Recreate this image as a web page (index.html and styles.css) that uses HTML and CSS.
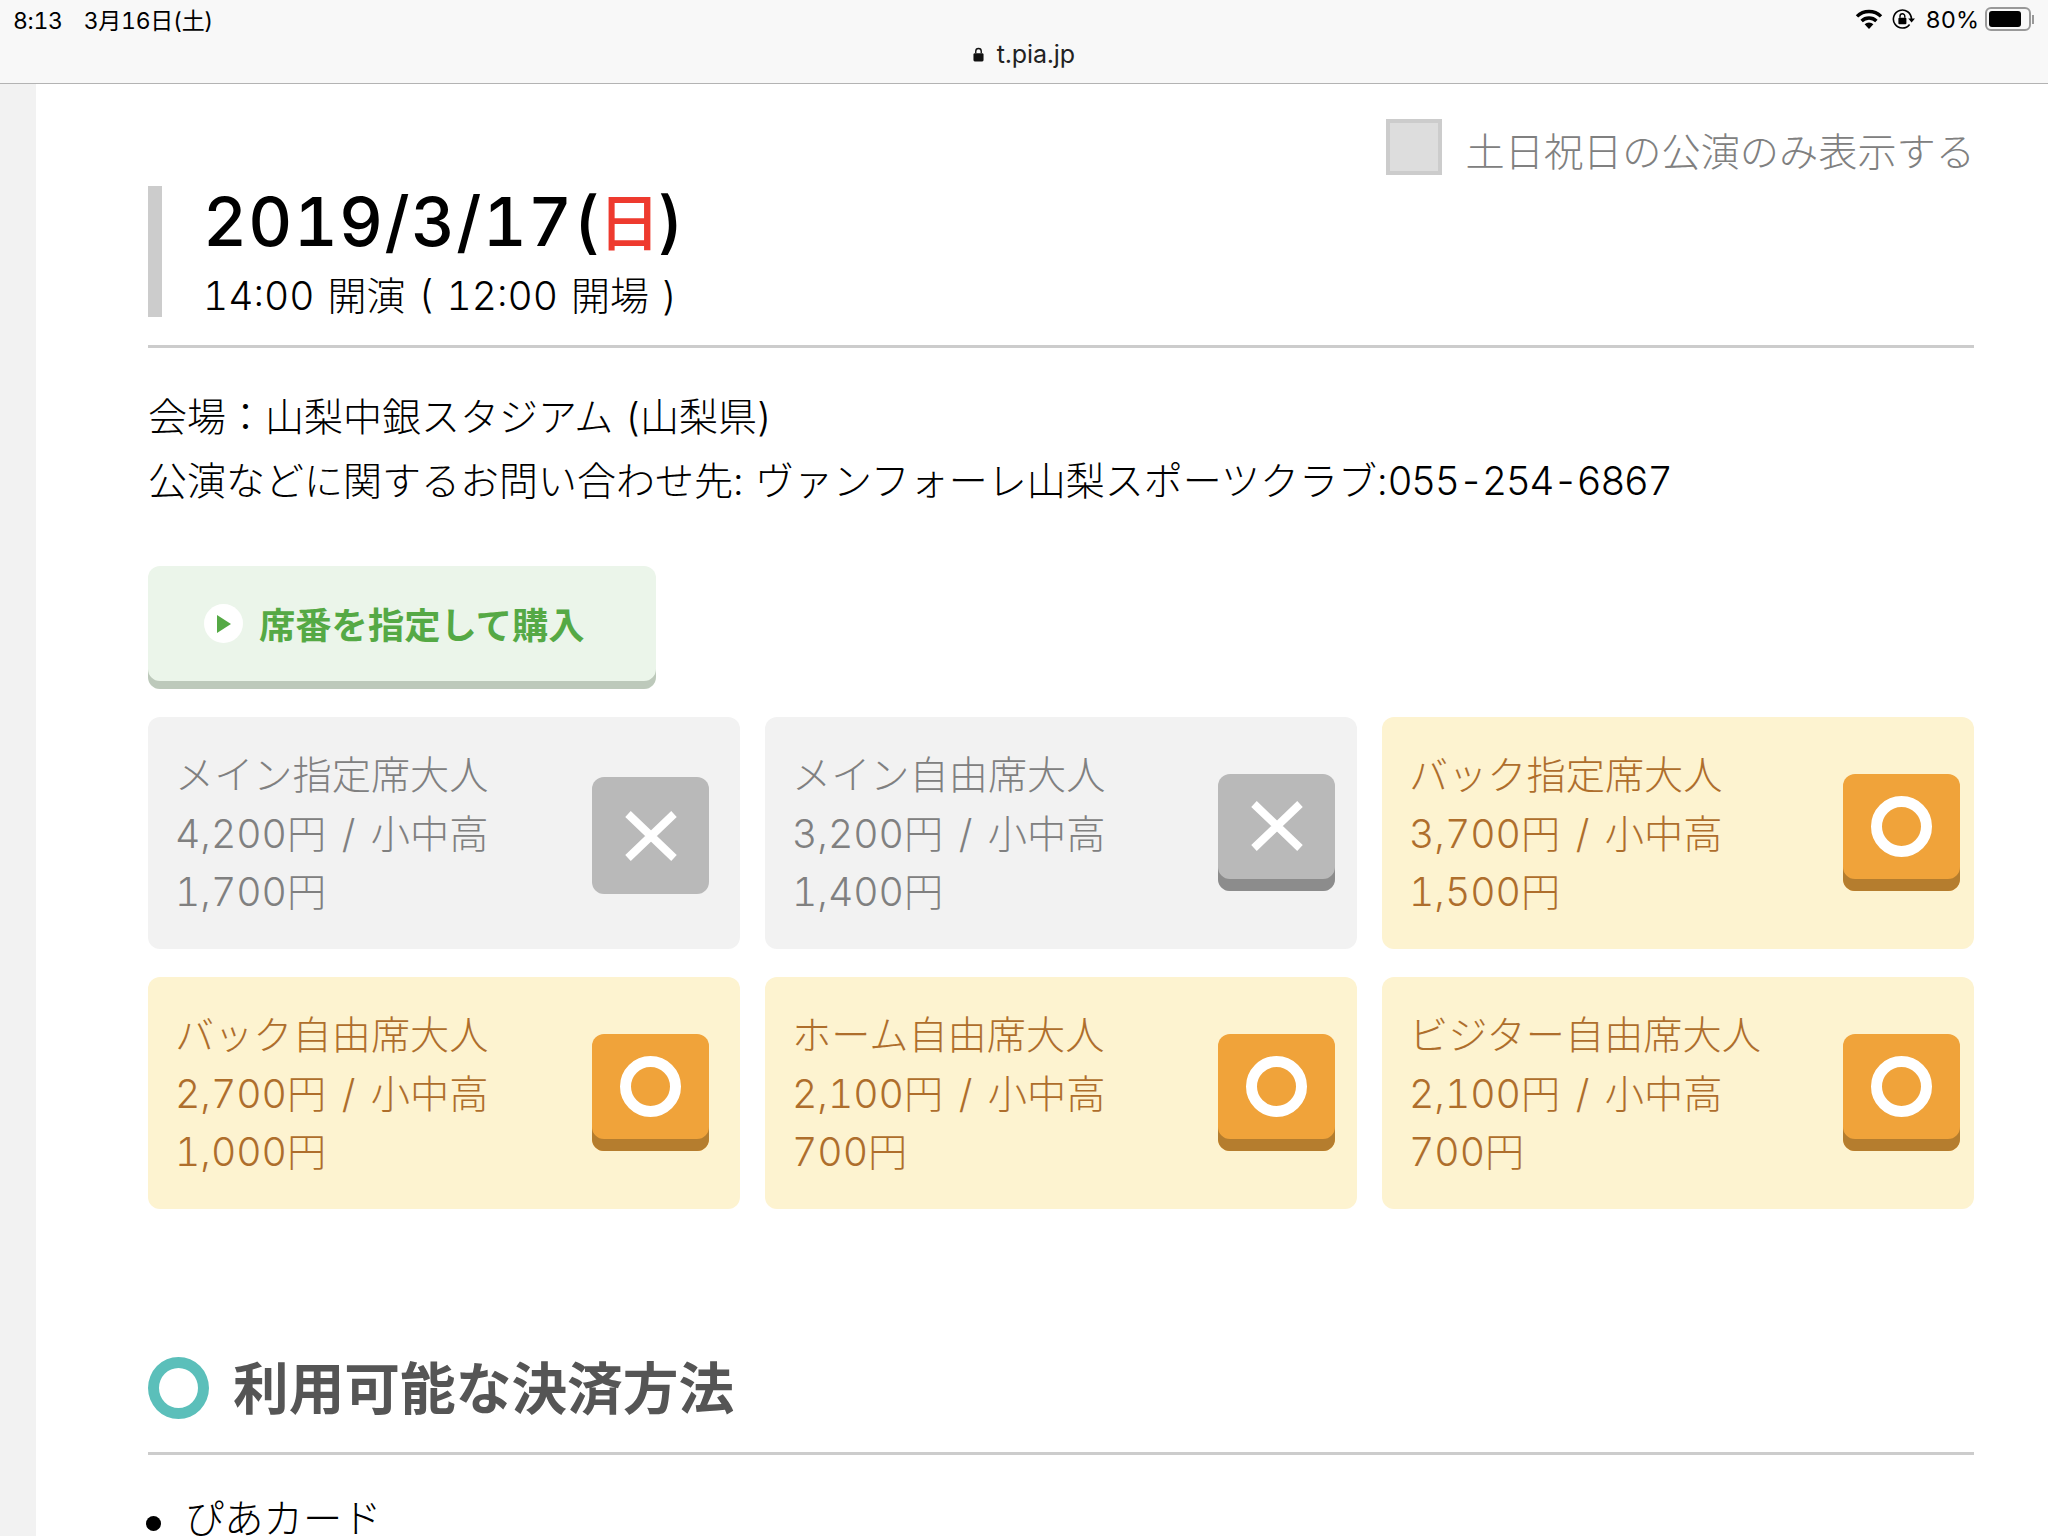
FILE: index.html
```html
<!DOCTYPE html>
<html lang="ja">
<head>
  <meta charset="UTF-8" />
  <title>t.pia.jp</title>
  <link rel="stylesheet" href="styles.css">
</head>
<body>
  <header class="topbar">
    <div class="status">
      <div class="status-left"><span class="clock">8:13</span><span>3月16日(土)</span></div>
      <div class="status-right">
        <svg class="wifi" viewBox="0 0 28 20" width="28" height="20">
          <path d="M14 20 L9.6 15.2 A6.4 6.4 0 0 1 18.4 15.2 Z" fill="#000"/>
          <path d="M6.6 12 A10.6 10.6 0 0 1 21.4 12" fill="none" stroke="#000" stroke-width="3.4"/>
          <path d="M2 7.4 A17 17 0 0 1 26 7.4" fill="none" stroke="#000" stroke-width="3.4"/>
        </svg>
        <svg class="rotlock" viewBox="0 0 24 20" width="24" height="20">
          <path d="M19.4 10 A9 9 0 1 0 17.6 15.4" fill="none" stroke="#000" stroke-width="1.6"/>
          <path d="M16.2 9.4 L23 9.4 L19.6 13.6 Z" fill="#000"/>
          <rect x="6.4" y="8.8" width="8" height="6.4" rx="1" fill="#000"/>
          <path d="M8 8.8 V7.2 A2.4 2.4 0 0 1 12.8 7.2 V8.8" fill="none" stroke="#000" stroke-width="1.4"/>
        </svg>
        <span class="battery-text">80%</span>
        <div class="battery"><div class="battery-level"></div></div>
        <div class="battery-nub"></div>
      </div>
    </div>
    <div class="address">
      <svg viewBox="0 0 12 15" width="11" height="15">
        <rect x="0.5" y="6" width="11" height="9" rx="1.5" fill="#111"/>
        <path d="M3 6 V4 A3 3 0 0 1 9 4 V6" fill="none" stroke="#111" stroke-width="1.5"/>
      </svg>
      <span>t.pia.jp</span>
    </div>
  </header>

  <div class="page">
    <div class="gutter"></div>
    <main class="content">
      <div class="holiday">
        <span class="checkbox"></span>
        <span class="holiday-label">土日祝日の公演のみ表示する</span>
      </div>

      <div class="date-block">
        <h1 class="date">2019/3/17(<span class="sun">日</span>)</h1>
        <p class="time">14:00 開演 ( 12:00 開場 )</p>
      </div>

      <div class="info">
        <p>会場：山梨中銀スタジアム (山梨県)</p>
        <p>公演などに関するお問い合わせ先: ヴァンフォーレ山梨スポーツクラブ:<span class="tel">055-254-6867</span></p>
      </div>

      <a class="buy" href="#">
        <span class="play"><svg viewBox="0 0 14 18" width="14" height="18"><path d="M0 0 L14 9 L0 18 Z" fill="#55a945"/></svg></span>
        <span class="buy-label">席番を指定して購入</span>
      </a>

      <div class="seats">
        <div class="seat off">
          <p>メイン指定席大人<br>4,200円 / 小中高<br>1,700円</p>
          <div class="mark flat"><svg class="cross" viewBox="0 0 52 50" width="52" height="50"><path d="M3 3 L49 47 M49 3 L3 47" stroke="#fff" stroke-width="8"/></svg></div>
        </div>
        <div class="seat off">
          <p>メイン自由席大人<br>3,200円 / 小中高<br>1,400円</p>
          <div class="mark"><svg class="cross" viewBox="0 0 52 50" width="52" height="50"><path d="M3 3 L49 47 M49 3 L3 47" stroke="#fff" stroke-width="8"/></svg></div>
        </div>
        <div class="seat">
          <p>バック指定席大人<br>3,700円 / 小中高<br>1,500円</p>
          <div class="mark"><span class="ring"></span></div>
        </div>
        <div class="seat">
          <p>バック自由席大人<br>2,700円 / 小中高<br>1,000円</p>
          <div class="mark"><span class="ring"></span></div>
        </div>
        <div class="seat">
          <p>ホーム自由席大人<br>2,100円 / 小中高<br>700円</p>
          <div class="mark"><span class="ring"></span></div>
        </div>
        <div class="seat">
          <p>ビジター自由席大人<br>2,100円 / 小中高<br>700円</p>
          <div class="mark"><span class="ring"></span></div>
        </div>
      </div>

      <h2 class="section"><span class="section-ring"></span><span class="section-title">利用可能な決済方法</span></h2>
      <ul class="pay">
        <li>ぴあカード</li>
      </ul>
    </main>
  </div>
</body>
</html>
```

FILE: styles.css
```css
html, body {
  margin: 0;
  height: 1536px;
  overflow: hidden;
}
body {
  font-family: Inter, "Noto Sans CJK JP", sans-serif;
  font-variant-numeric: tabular-nums;
  background: #fff;
  color: #000;
}
p, h1, h2, ul {
  margin: 0;
  padding: 0;
}

/* browser bar */
.topbar {
  height: 83px;
  background: #f8f8f8;
  border-bottom: 1px solid #b3b3b3;
}
.status {
  display: flex;
  justify-content: space-between;
  align-items: center;
  height: 38px;
  font-size: 23.5px;
  padding: 0 14px 0 13px;
}
.status-left {
  display: flex;
  align-items: baseline;
  gap: 21px;
  font-size: 23px;
  letter-spacing: -0.3px;
}
.status-right {
  display: flex;
  align-items: center;
}
.wifi { margin-right: 9px; }
.rotlock { margin-right: 9px; }
.battery-text { margin-right: 6px; }
.battery {
  box-sizing: border-box;
  width: 46px;
  height: 24px;
  border: 2px solid #999;
  border-radius: 6px;
  padding: 2px;
}
.battery-level {
  width: 32px;
  height: 16px;
  background: #000;
  border-radius: 3px;
}
.battery-nub {
  width: 2px;
  height: 9px;
  margin-left: 1px;
  background: #999;
}
.address {
  display: flex;
  justify-content: center;
  align-items: center;
  gap: 13px;
  font-size: 25px;
  height: 32px;
  color: #222;
}

.page {
  display: flex;
}
.gutter {
  width: 36px;
  height: 1452px;
  background: #f2f2f2;
}
.content {
  width: 1826px;
  margin-left: 112px;
  padding-top: 35px;
}

.holiday {
  display: flex;
  align-items: center;
  justify-content: flex-end;
  gap: 24px;
  font-size: 39.2px;
  font-weight: 300;
  color: #808080;
  height: 56px;
}
.holiday-label {
  margin-top: 4px;
  margin-right: -1px;
}
.checkbox {
  box-sizing: border-box;
  width: 56px;
  height: 56px;
  background: #ddd;
  border: 4px solid #ccc;
}

.date-block {
  margin-top: 11px;
  height: 131px;
  border-left: 14px solid #ccc;
  padding-left: 41px;
}
.date {
  font-size: 68px;
  font-weight: 500;
  line-height: 70px;
  letter-spacing: 1.3px;
}
.sun {
  color: #ee3a2e;
  font-size: 62px;
  letter-spacing: 0;
  margin: 0 -3px 0 -3px;
}
.time {
  font-size: 39px;
  font-weight: 300;
  line-height: 50px;
  margin-top: 12px;
  word-spacing: 2.5px;
}

.info {
  margin-top: 28px;
  border-top: 3px solid #ccc;
  padding-top: 37px;
  font-size: 39px;
  font-weight: 300;
  line-height: 64px;
  word-spacing: 1px;
}
.tel {
  letter-spacing: -1.6px;
}

.buy {
  display: flex;
  align-items: center;
  box-sizing: border-box;
  width: 508px;
  height: 123px;
  margin-top: 53px;
  padding: 0 0 8px 56px;
  gap: 16px;
  background: #ebf5ea;
  border-radius: 12px;
  box-shadow: inset 0 -8px 0 #bdc9bb;
  color: #55a945;
  font-size: 36.3px;
  font-weight: 700;
  text-decoration: none;
}
.buy-label {
  margin-bottom: 2px;
}
.play {
  display: flex;
  align-items: center;
  justify-content: center;
  width: 39px;
  height: 39px;
  background: #fff;
  border-radius: 50%;
}

.seats {
  display: grid;
  grid-template-columns: repeat(3, 592px);
  grid-auto-rows: 232px;
  column-gap: 25px;
  row-gap: 28px;
  margin-top: 28px;
}
.seat {
  display: flex;
  align-items: center;
  justify-content: space-between;
  padding-left: 27px;
  background: #fdf3d0;
  border-radius: 12px;
  color: #ae6e2c;
  font-size: 39.2px;
  font-weight: 300;
  line-height: 58.5px;
  word-spacing: 5px;
}
.seat p {
  margin-top: 2px;
}
.seat.off {
  background: #f2f2f2;
  color: #808080;
}
.seat:nth-child(3n+1) { padding-right: 31px; }
.seat:nth-child(3n+2) { padding-right: 22px; }
.seat:nth-child(3n) { padding-right: 14px; }

.mark {
  display: flex;
  align-items: center;
  justify-content: center;
  box-sizing: border-box;
  width: 117px;
  height: 117px;
  margin-top: -2px;
  padding-bottom: 12px;
  background: #f0a33a;
  border-radius: 12px;
  box-shadow: inset 0 -12px 0 #b57d2e;
}
.off .mark {
  background: #b9b9b9;
  box-shadow: inset 0 -12px 0 #8c8c8c;
}
.off .mark.flat {
  padding-bottom: 0;
  margin-top: 5px;
  box-shadow: none;
}
.ring {
  box-sizing: border-box;
  width: 61px;
  height: 61px;
  border: 11px solid #fff;
  border-radius: 50%;
}

.section {
  display: flex;
  align-items: center;
  gap: 24px;
  margin-top: 148px;
  height: 62px;
  padding-bottom: 33px;
  border-bottom: 3px solid #ccc;
  font-size: 55.7px;
  font-weight: 700;
  color: #555;
}
.section-ring {
  box-sizing: border-box;
  width: 61px;
  height: 62px;
  border: 11px solid #5bbfba;
  border-radius: 50%;
}
.section-title {
  margin-bottom: 8px;
}

.pay {
  margin-top: 32px;
  list-style: none;
  font-size: 39.3px;
  font-weight: 300;
  line-height: 64px;
}
.pay li {
  display: flex;
  align-items: center;
  gap: 24px;
  margin-left: -2px;
}
.pay li::before {
  content: "";
  width: 15px;
  height: 15px;
  margin-top: 8px;
  background: #000;
  border-radius: 50%;
}
```
